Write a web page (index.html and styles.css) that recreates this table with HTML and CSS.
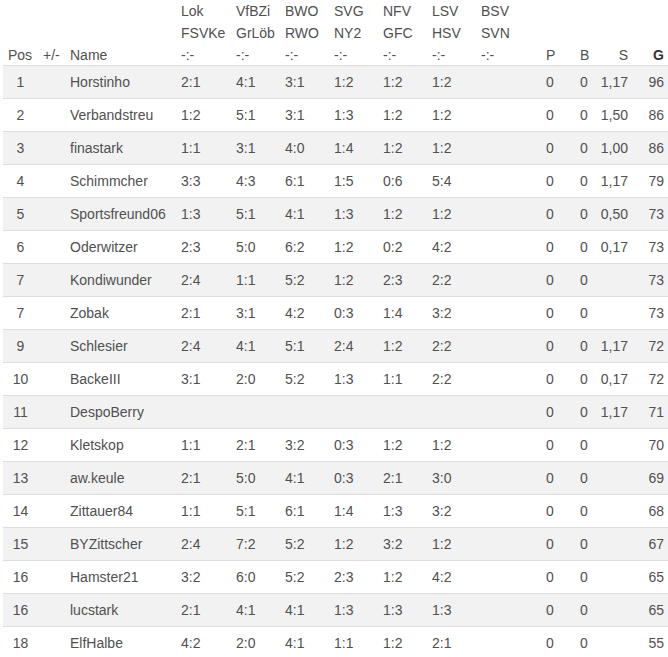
FILE: index.html
```html
<!DOCTYPE html>
<html lang="de">
<head>
<meta charset="utf-8">
<title>Tabelle</title>
<link rel="stylesheet" href="styles.css">
</head>
<body>
<div class="wrap">
<table class="standings">
<colgroup>
<col class="c-pos"><col class="c-diff"><col class="c-name">
<col class="c-lok"><col class="c-m"><col class="c-m"><col class="c-m"><col class="c-m"><col class="c-m">
<col class="c-bsv"><col class="c-p"><col class="c-b"><col class="c-s"><col class="c-g">
</colgroup>
<thead>
<tr>
<th><span class="l1"></span><span class="l2"></span><span class="l3">Pos</span></th>
<th><span class="l1"></span><span class="l2"></span><span class="l3">+/-</span></th>
<th><span class="l1"></span><span class="l2"></span><span class="l3">Name</span></th>
<th><span class="l1">Lok</span><span class="l2">FSVKe</span><span class="l3">-:-</span></th>
<th><span class="l1">VfBZi</span><span class="l2">GrLöb</span><span class="l3">-:-</span></th>
<th><span class="l1">BWO</span><span class="l2">RWO</span><span class="l3">-:-</span></th>
<th><span class="l1">SVG</span><span class="l2">NY2</span><span class="l3">-:-</span></th>
<th><span class="l1">NFV</span><span class="l2">GFC</span><span class="l3">-:-</span></th>
<th><span class="l1">LSV</span><span class="l2">HSV</span><span class="l3">-:-</span></th>
<th><span class="l1">BSV</span><span class="l2">SVN</span><span class="l3">-:-</span></th>
<th><span class="l1"></span><span class="l2"></span><span class="l3">P</span></th>
<th><span class="l1"></span><span class="l2"></span><span class="l3">B</span></th>
<th class="r"><span class="l1"></span><span class="l2"></span><span class="l3">S</span></th>
<th class="r g"><span class="l1"></span><span class="l2"></span><span class="l3 bold">G</span></th>
</tr>
</thead>
<tbody>
<tr><td class="pos">1</td><td></td><td>Horstinho</td><td>2:1</td><td>4:1</td><td>3:1</td><td>1:2</td><td>1:2</td><td>1:2</td><td></td><td>0</td><td>0</td><td class="r">1,17</td><td class="r g">96</td></tr>
<tr><td class="pos">2</td><td></td><td>Verbandstreu</td><td>1:2</td><td>5:1</td><td>3:1</td><td>1:3</td><td>1:2</td><td>1:2</td><td></td><td>0</td><td>0</td><td class="r">1,50</td><td class="r g">86</td></tr>
<tr><td class="pos">3</td><td></td><td>finastark</td><td>1:1</td><td>3:1</td><td>4:0</td><td>1:4</td><td>1:2</td><td>1:2</td><td></td><td>0</td><td>0</td><td class="r">1,00</td><td class="r g">86</td></tr>
<tr><td class="pos">4</td><td></td><td>Schimmcher</td><td>3:3</td><td>4:3</td><td>6:1</td><td>1:5</td><td>0:6</td><td>5:4</td><td></td><td>0</td><td>0</td><td class="r">1,17</td><td class="r g">79</td></tr>
<tr><td class="pos">5</td><td></td><td>Sportsfreund06</td><td>1:3</td><td>5:1</td><td>4:1</td><td>1:3</td><td>1:2</td><td>1:2</td><td></td><td>0</td><td>0</td><td class="r">0,50</td><td class="r g">73</td></tr>
<tr><td class="pos">6</td><td></td><td>Oderwitzer</td><td>2:3</td><td>5:0</td><td>6:2</td><td>1:2</td><td>0:2</td><td>4:2</td><td></td><td>0</td><td>0</td><td class="r">0,17</td><td class="r g">73</td></tr>
<tr><td class="pos">7</td><td></td><td>Kondiwunder</td><td>2:4</td><td>1:1</td><td>5:2</td><td>1:2</td><td>2:3</td><td>2:2</td><td></td><td>0</td><td>0</td><td class="r"></td><td class="r g">73</td></tr>
<tr><td class="pos">7</td><td></td><td>Zobak</td><td>2:1</td><td>3:1</td><td>4:2</td><td>0:3</td><td>1:4</td><td>3:2</td><td></td><td>0</td><td>0</td><td class="r"></td><td class="r g">73</td></tr>
<tr><td class="pos">9</td><td></td><td>Schlesier</td><td>2:4</td><td>4:1</td><td>5:1</td><td>2:4</td><td>1:2</td><td>2:2</td><td></td><td>0</td><td>0</td><td class="r">1,17</td><td class="r g">72</td></tr>
<tr><td class="pos">10</td><td></td><td>BackeIII</td><td>3:1</td><td>2:0</td><td>5:2</td><td>1:3</td><td>1:1</td><td>2:2</td><td></td><td>0</td><td>0</td><td class="r">0,17</td><td class="r g">72</td></tr>
<tr><td class="pos">11</td><td></td><td>DespoBerry</td><td></td><td></td><td></td><td></td><td></td><td></td><td></td><td>0</td><td>0</td><td class="r">1,17</td><td class="r g">71</td></tr>
<tr><td class="pos">12</td><td></td><td>Kletskop</td><td>1:1</td><td>2:1</td><td>3:2</td><td>0:3</td><td>1:2</td><td>1:2</td><td></td><td>0</td><td>0</td><td class="r"></td><td class="r g">70</td></tr>
<tr><td class="pos">13</td><td></td><td>aw.keule</td><td>2:1</td><td>5:0</td><td>4:1</td><td>0:3</td><td>2:1</td><td>3:0</td><td></td><td>0</td><td>0</td><td class="r"></td><td class="r g">69</td></tr>
<tr><td class="pos">14</td><td></td><td>Zittauer84</td><td>1:1</td><td>5:1</td><td>6:1</td><td>1:4</td><td>1:3</td><td>3:2</td><td></td><td>0</td><td>0</td><td class="r"></td><td class="r g">68</td></tr>
<tr><td class="pos">15</td><td></td><td>BYZittscher</td><td>2:4</td><td>7:2</td><td>5:2</td><td>1:2</td><td>3:2</td><td>1:2</td><td></td><td>0</td><td>0</td><td class="r"></td><td class="r g">67</td></tr>
<tr><td class="pos">16</td><td></td><td>Hamster21</td><td>3:2</td><td>6:0</td><td>5:2</td><td>2:3</td><td>1:2</td><td>4:2</td><td></td><td>0</td><td>0</td><td class="r"></td><td class="r g">65</td></tr>
<tr><td class="pos">16</td><td></td><td>lucstark</td><td>2:1</td><td>4:1</td><td>4:1</td><td>1:3</td><td>1:3</td><td>1:3</td><td></td><td>0</td><td>0</td><td class="r"></td><td class="r g">65</td></tr>
<tr><td class="pos">18</td><td></td><td>ElfHalbe</td><td>4:2</td><td>2:0</td><td>4:1</td><td>1:1</td><td>1:2</td><td>2:1</td><td></td><td>0</td><td>0</td><td class="r"></td><td class="r g">55</td></tr>
</tbody>
</table>
</div>
</body>
</html>
```

FILE: styles.css
```css
html, body {
  margin: 0;
  padding: 0;
  overflow: hidden;
  background: #fff;
}

body {
  font-family: "Liberation Sans", Arial, sans-serif;
  font-size: 14px;
  color: #505050;
}

.wrap {
  padding-left: 3px;
}

.standings {
  border-collapse: collapse;
  table-layout: fixed;
  width: 665px;
}

.c-pos { width: 35px; }
.c-diff { width: 27px; }
.c-name { width: 111px; }
.c-lok { width: 55px; }
.c-m { width: 49px; }
.c-bsv { width: 65px; }
.c-p { width: 34px; }
.c-b { width: 20px; }
.c-s { width: 38px; }
.c-g { width: 35px; }

.standings th {
  font-weight: normal;
  text-align: left;
  vertical-align: bottom;
  padding: 0 5px;
  border-bottom: 1px solid #dddddd;
  white-space: nowrap;
}

.standings th span {
  display: block;
  height: 22px;
  line-height: 22px;
}

.standings th span.l3 {
  height: 21px;
}

.standings th .bold {
  font-weight: bold;
  color: #333;
}

.standings td {
  padding: 6px 5px;
  line-height: 20px;
  border-top: 1px solid #dddddd;
  text-align: left;
  white-space: nowrap;
}

.standings tbody tr:first-child td {
  border-top: 0;
}

.standings tbody tr:nth-child(odd) {
  background: #f2f2f2;
}

.standings .pos {
  text-align: center;
}

.standings .r {
  text-align: right;
}

.standings .g {
  padding-right: 4px;
}
```
